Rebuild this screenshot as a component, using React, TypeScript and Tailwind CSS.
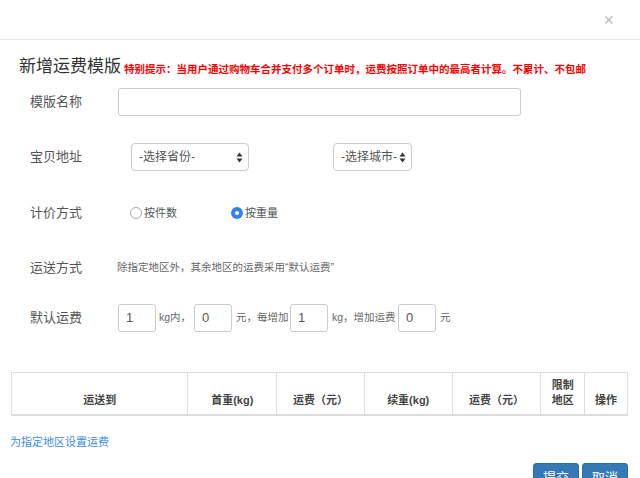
import React from 'react';

const FONT = { fontFamily: '"Liberation Sans", "Noto Sans CJK SC", sans-serif' };

function SelectBox({ label, className }: { label: string; className: string }) {
  return (
    <div
      className={`h-[28px] flex items-center justify-between border border-[#ccc] rounded-[4px] pl-[7px] pr-[5px] text-[12px] text-[#555] bg-white whitespace-nowrap ${className}`}
    >
      <span>{label}</span>
      <svg width="7" height="11" viewBox="0 0 7 11" className="shrink-0">
        <path d="M3.5 0.5 L6.5 4.5 L0.5 4.5 Z" fill="#333" />
        <path d="M3.5 10.5 L6.5 6.5 L0.5 6.5 Z" fill="#333" />
      </svg>
    </div>
  );
}

function Radio({ checked, label }: { checked?: boolean; label: string }) {
  return (
    <label className="flex items-center gap-[2px] text-[11px] text-[#555] whitespace-nowrap">
      {checked ? (
        <span className="w-[12px] h-[12px] rounded-full bg-[#2f84f0] flex items-center justify-center">
          <span className="w-[4px] h-[4px] rounded-full bg-white" />
        </span>
      ) : (
        <span className="w-[12px] h-[12px] rounded-full border border-[#aaa] bg-white" />
      )}
      <span>{label}</span>
    </label>
  );
}

function NumBox({ value }: { value: string }) {
  return (
    <div className="w-[38px] h-[28px] shrink-0 border border-[#ccc] rounded-[3px] flex items-center pl-[7px] text-[13px] text-[#555]">
      {value}
    </div>
  );
}

const COLS = [
  { w: 'w-[176px]', t: '运送到' },
  { w: 'w-[89px]', t: '首重(kg)' },
  { w: 'w-[88px]', t: '运费（元）' },
  { w: 'w-[88px]', t: '续重(kg)' },
  { w: 'w-[89px]', t: '运费（元）' },
  { w: 'w-[44px]', t: '限制\n地区' },
  { w: 'w-[43px]', t: '操作' },
];

export default function App() {
  return (
    <div className="w-[640px] h-[478px] overflow-hidden bg-white relative" style={FONT}>
      {/* header */}
      <div className="h-[40px] border-b border-[#e5e5e5] flex items-center justify-end pr-[26px]">
        <span className="text-[18px] text-[#bbb] leading-none">×</span>
      </div>

      {/* title */}
      <div className="flex items-end pl-[19px] mt-[16px] h-[22px] whitespace-nowrap">
        <h2 className="text-[17px] text-[#333] leading-[22px]">新增运费模版</h2>
        <span className="ml-[3px] mb-[2px] text-[10.5px] font-bold text-[#f00] leading-[14px]">
          特别提示：当用户通过购物车合并支付多个订单时，运费按照订单中的最高者计算。不累计、不包邮
        </span>
      </div>

      {/* form */}
      <div className="flex flex-col">
        <div className="flex items-center h-[28px] mt-[10px]">
          <span className="w-[88px] pl-[30px] text-[13px] text-[#555]">模版名称</span>
          <div className="ml-[30px] w-[403px] h-[28px] border border-[#ccc] rounded-[3px]" />
        </div>

        <div className="flex items-center h-[28px] mt-[27px]">
          <span className="w-[88px] pl-[30px] text-[13px] text-[#555]">宝贝地址</span>
          <SelectBox label="-选择省份-" className="ml-[43px] w-[118px]" />
          <SelectBox label="-选择城市-" className="ml-[84px] w-[79px]" />
        </div>

        <div className="flex items-center h-[28px] mt-[28px]">
          <span className="w-[88px] pl-[30px] text-[13px] text-[#555]">计价方式</span>
          <div className="ml-[42px] w-[101px]">
            <Radio label="按件数" />
          </div>
          <Radio checked label="按重量" />
        </div>

        <div className="flex items-center h-[28px] mt-[27px]">
          <span className="w-[88px] pl-[30px] text-[13px] text-[#555]">运送方式</span>
          <span className="ml-[29px] text-[10.5px] text-[#666] whitespace-nowrap">
            除指定地区外，其余地区的运费采用“默认运费”
          </span>
        </div>

        <div className="flex items-center h-[28px] mt-[22px] text-[10.5px] text-[#666] whitespace-nowrap">
          <span className="w-[88px] pl-[30px] text-[13px] text-[#555]">默认运费</span>
          <div className="ml-[30px] flex items-center">
            <NumBox value="1" />
            <span className="ml-[3px] w-[35px] shrink-0">kg内，</span>
            <NumBox value="0" />
            <span className="ml-[4px] w-[54px] shrink-0">元，每增加</span>
            <NumBox value="1" />
            <span className="ml-[4px] w-[66px] shrink-0">kg，增加运费</span>
            <NumBox value="0" />
            <span className="ml-[4px]">元</span>
          </div>
        </div>
      </div>

      {/* table */}
      <div className="mt-[40px] ml-[11px] flex border border-[#ddd] border-b-2 w-[617px] h-[44px]">
        {COLS.map((c, i) => (
          <div
            key={i}
            className={`${c.w} ${i > 0 ? 'border-l border-[#ddd]' : ''} flex items-end justify-center pb-[6px] text-[11px] font-bold text-[#444] leading-[15px] text-center whitespace-pre-line`}
          >
            {c.t}
          </div>
        ))}
      </div>

      {/* link */}
      <div className="mt-[18px] ml-[10px] text-[11px] text-[#3a8ee6]">为指定地区设置运费</div>

      {/* buttons */}
      <div className="absolute left-[533px] top-[463px] flex gap-[3px]">
        <button className="w-[46px] h-[30px] bg-[#337ab7] border border-[#2e6da4] rounded-[3px] text-white text-[13px] leading-[28px]">
          提交
        </button>
        <button className="w-[46px] h-[30px] bg-[#337ab7] border border-[#2e6da4] rounded-[3px] text-white text-[13px] leading-[28px]">
          取消
        </button>
      </div>
    </div>
  );
}
